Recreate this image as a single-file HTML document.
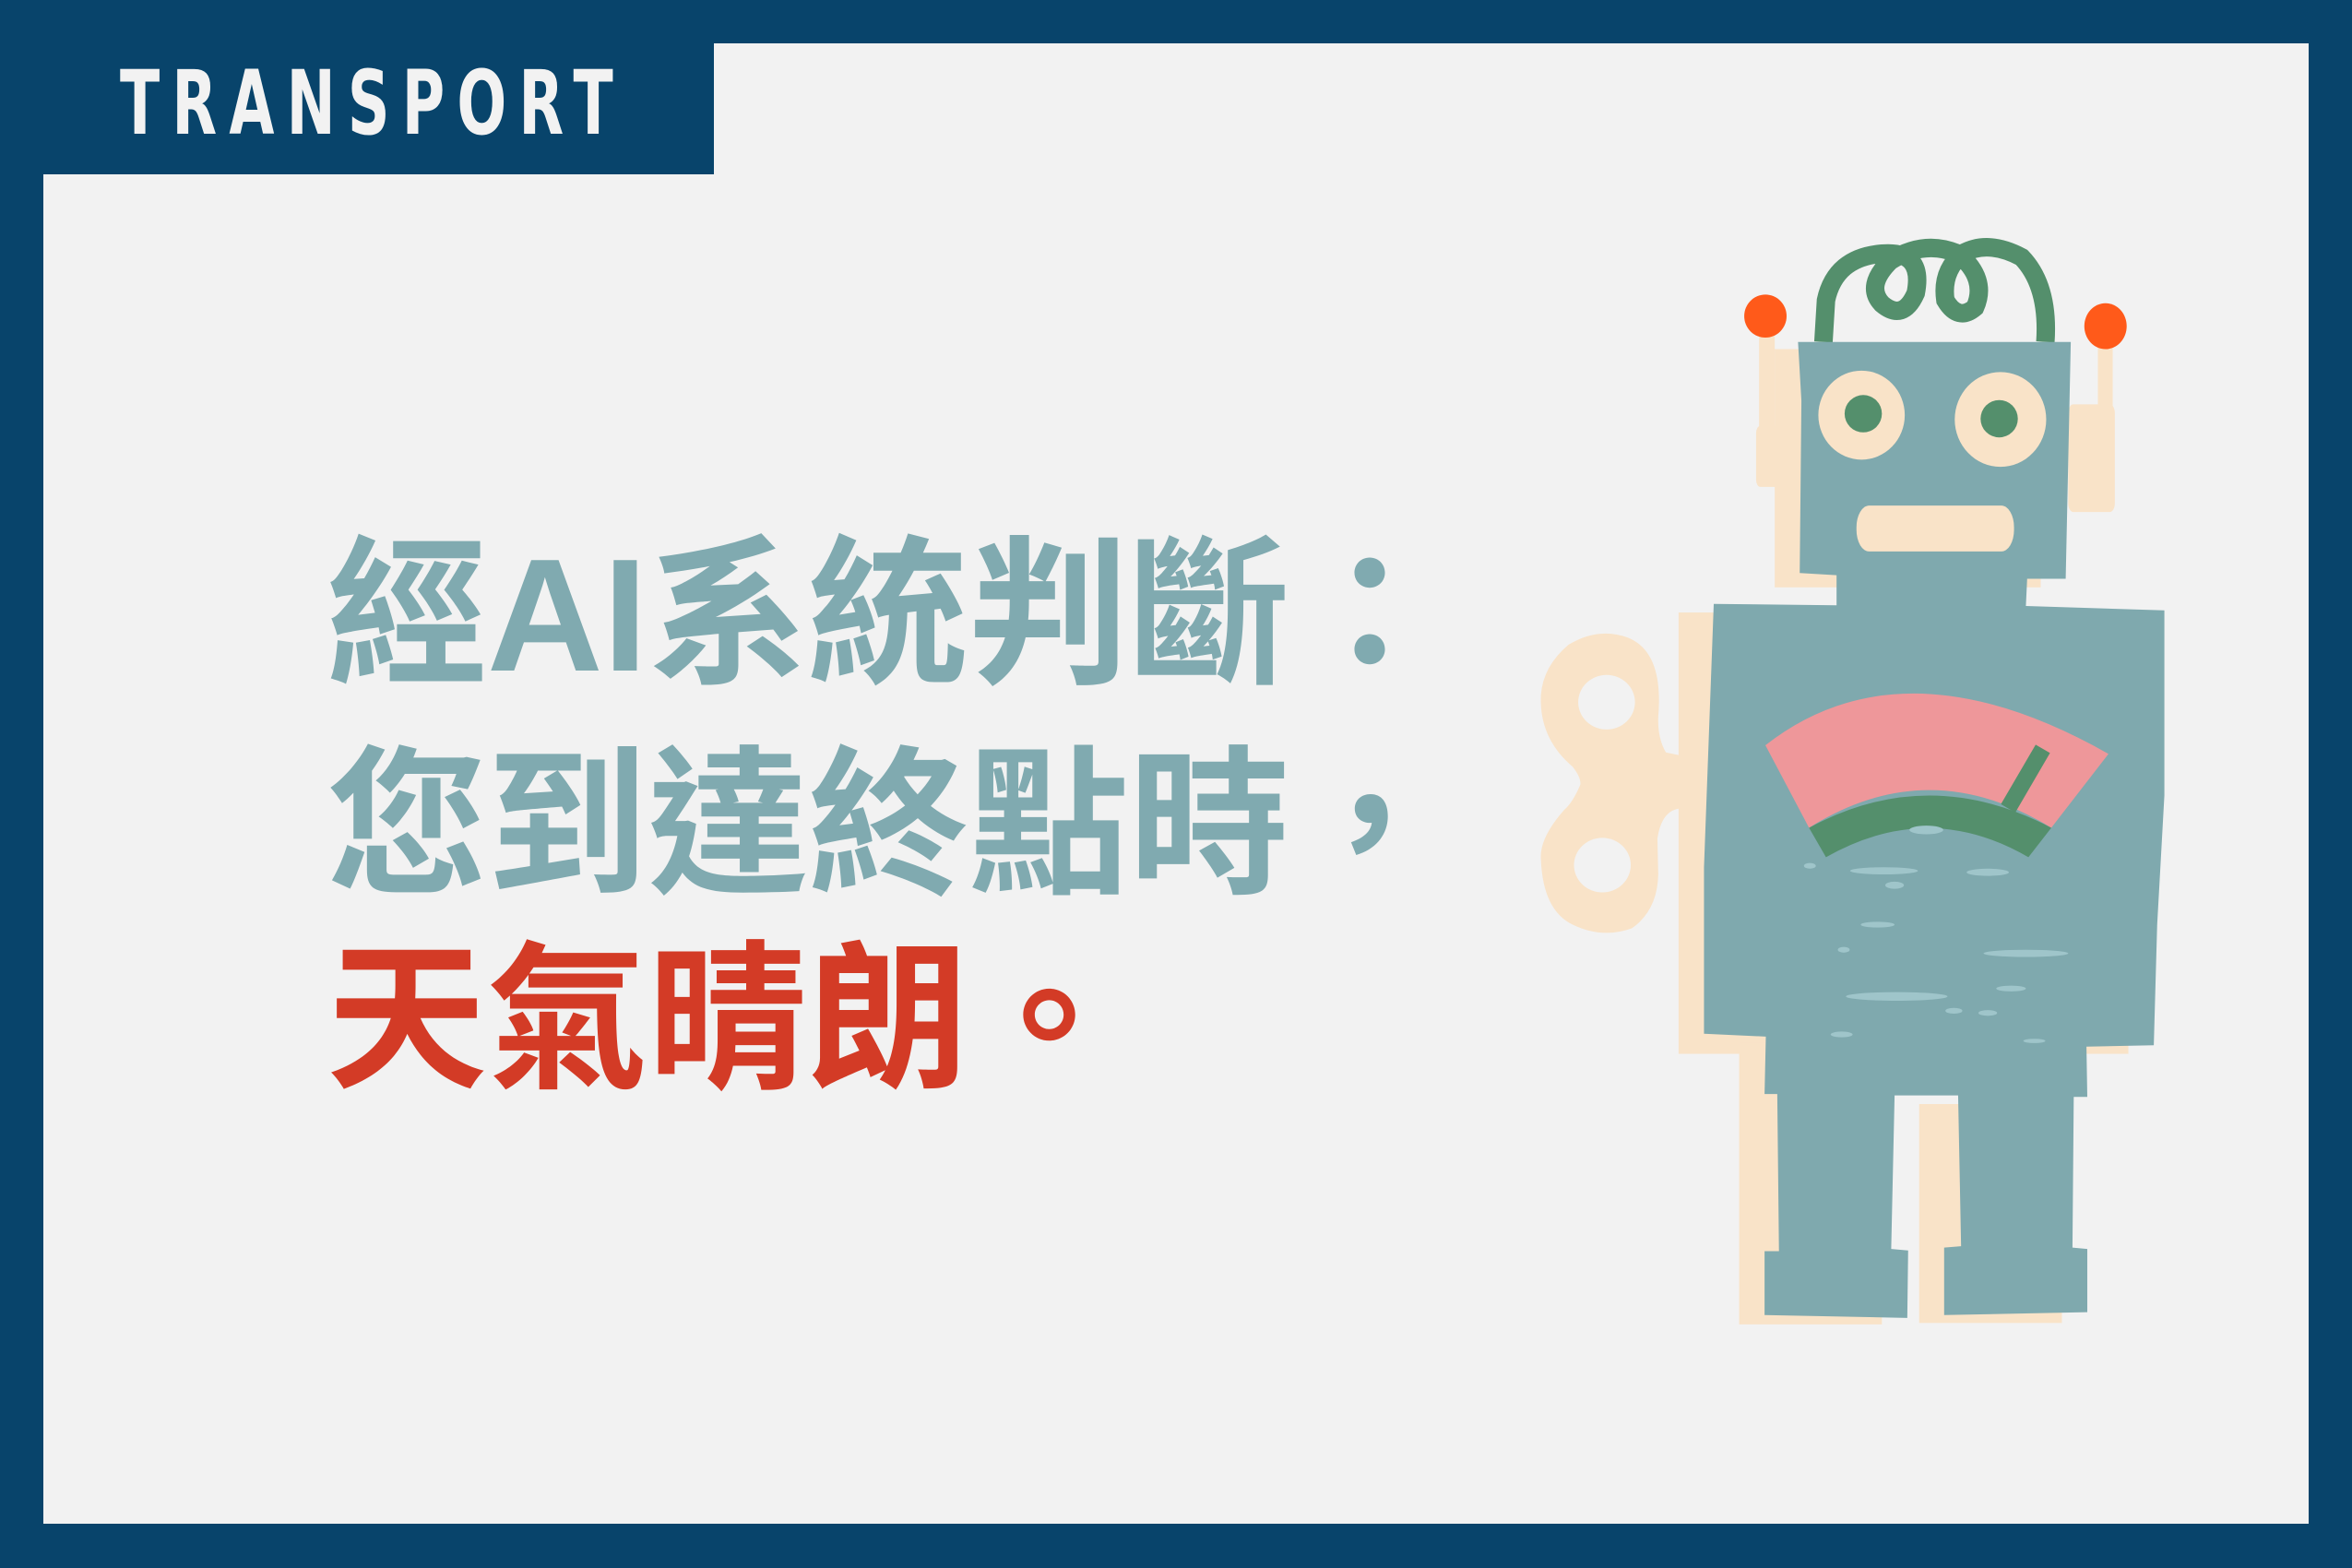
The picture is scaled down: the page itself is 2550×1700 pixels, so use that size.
<!DOCTYPE html>
<html><head><meta charset="utf-8"><style>
html,body{margin:0;padding:0}
body{width:2550px;height:1700px;background:#08446B;position:relative;overflow:hidden}
.panel{position:absolute;left:47px;top:47px;width:2456px;height:1605px;background:#F2F2F2}
.tab{position:absolute;left:0;top:0;width:774px;height:189px;background:#08446B}
.tabt{position:absolute;left:130px;top:64px;font:bold 96px/1 "DejaVu Sans","Liberation Sans",sans-serif;color:#F2F2F2;letter-spacing:20px;transform:scaleX(0.66);transform-origin:left top}
.l{position:absolute;left:354px;font-family:"Liberation Sans","Noto Sans CJK TC",sans-serif;font-weight:bold;font-size:174px;line-height:1;white-space:nowrap;color:#80AAB0}
</style></head><body>
<div class="panel"></div>
<div class="tab"></div>
<div class="tabt">TRANSPORT</div>
<div class="l" style="top:580px">經AI系統判斷：</div>
<div class="l" style="top:808px">您到達終點時，</div>
<div class="l" style="top:1019px;color:#D33B26">天氣晴朗。</div>
<svg style="position:absolute;left:1650px;top:240px" width="720" height="1220" viewBox="0 0 1568 1568" preserveAspectRatio="none">
<g fill="#F9E3C8">
<rect x="370" y="545" width="1062" height="615"/>
<rect x="597" y="178" width="628" height="332"/>
<rect x="513" y="1145" width="337" height="392"/>
<rect x="938" y="1230" width="337" height="305"/>
<path d="M380,745 L340,740 Q320,720 322,690 Q335,600 250,580 Q180,565 110,590 Q50,620 45,660 Q40,720 120,760 Q140,775 138,785 Q120,810 100,820 Q40,860 45,890 Q50,960 120,980 Q190,1000 260,985 Q320,960 322,910 L320,860 Q330,820 375,818 Z"/>
<rect x="560" y="160" width="37" height="140"/>
<rect x="553" y="285" width="107" height="85" rx="10"/>
<rect x="1360" y="175" width="35" height="130"/>
<rect x="1290" y="255" width="110" height="150" rx="12"/>
</g>
<ellipse cx="200" cy="670" rx="67" ry="38" fill="#F2F2F2"/>
<ellipse cx="190" cy="897" rx="67" ry="38" fill="#F2F2F2"/>
<ellipse cx="575" cy="132" rx="50" ry="30" fill="#FF5A1A"/>
<ellipse cx="1378" cy="146" rx="50" ry="32" fill="#FF5A1A"/>
<path d="M712,168 L718,110 Q740,50 850,45 Q950,40 930,100 Q900,140 850,115 Q810,90 870,55 Q950,25 1030,45 Q1100,80 1070,120 Q1030,140 1000,110 Q990,70 1040,45 Q1100,25 1180,50 Q1245,90 1236,168" fill="none" stroke="#548F6C" stroke-width="20" vector-effect="non-scaling-stroke"/>
<path fill="#7FA9AE" d="M652,168 L1296,168 L1284,498 L1193,498 L1190,536 L1517,542 L1517,800 L1500,980 L1492,1148 L1333,1150 L1335,1220 L1303,1220 L1300,1430 L1335,1432 L1335,1520 L997,1524 L997,1430 L1037,1428 L1030,1218 L880,1218 L872,1432 L912,1434 L910,1528 L573,1524 L573,1435 L607,1435 L603,1216 L573,1216 L576,1136 L430,1132 L430,900 L453,533 L743,535 L743,493 L656,490 L660,250 Z"/>
<ellipse cx="802" cy="270" rx="102" ry="62" fill="#F9E3C8"/>
<ellipse cx="1130" cy="276" rx="108" ry="66" fill="#F9E3C8"/>
<ellipse cx="806" cy="268" rx="44" ry="26" fill="#548F6C"/>
<ellipse cx="1127" cy="275" rx="44" ry="26" fill="#548F6C"/>
<rect x="790" y="396" width="372" height="64" rx="30" fill="#F9E3C8"/>
<path d="M575,730 Q900,580 1385,742 L1250,845 Q960,740 678,845 Z" fill="#EE979A"/>
<path d="M678,845 Q960,755 1250,845 L1196,886 Q960,805 718,886 Z" fill="#548F6C"/>
<path d="M1148,818 L1230,735" stroke="#548F6C" stroke-width="18" vector-effect="non-scaling-stroke"/>
<g fill="#9FC5CA">
<ellipse cx="955" cy="848" rx="40" ry="6"/><ellipse cx="855" cy="905" rx="80" ry="5"/>
<ellipse cx="1100" cy="907" rx="50" ry="5"/><ellipse cx="880" cy="925" rx="22" ry="5"/>
<ellipse cx="1190" cy="1020" rx="100" ry="5"/><ellipse cx="885" cy="1080" rx="120" ry="6"/>
<ellipse cx="840" cy="980" rx="40" ry="4"/><ellipse cx="1100" cy="1103" rx="22" ry="4"/>
<ellipse cx="755" cy="1133" rx="26" ry="4"/><ellipse cx="1155" cy="1069" rx="35" ry="4"/>
<ellipse cx="1210" cy="1142" rx="26" ry="3"/><ellipse cx="680" cy="898" rx="14" ry="4"/>
<ellipse cx="1020" cy="1100" rx="20" ry="4"/><ellipse cx="760" cy="1015" rx="14" ry="4"/>
</g>
</svg>
</body></html>
